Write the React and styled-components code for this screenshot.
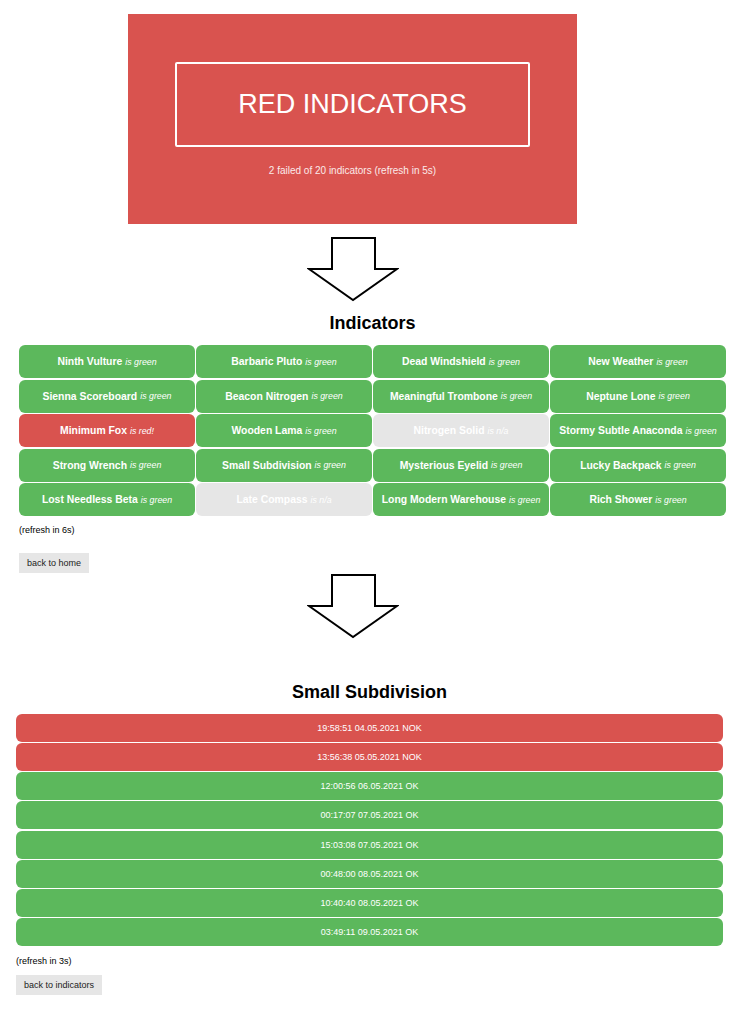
import React from 'react';
import styled, { createGlobalStyle } from 'styled-components';

const GlobalStyle = createGlobalStyle`
  body {
    margin: 0;
    background: #fff;
    font-family: "Liberation Sans", Arial, sans-serif;
  }
`;

const colors = {
  green: '#5cb85c',
  red: '#d9534f',
  na: '#e6e6e6',
};

const indicators = [
  ['Ninth Vulture', 'green'], ['Barbaric Pluto', 'green'], ['Dead Windshield', 'green'], ['New Weather', 'green'],
  ['Sienna Scoreboard', 'green'], ['Beacon Nitrogen', 'green'], ['Meaningful Trombone', 'green'], ['Neptune Lone', 'green'],
  ['Minimum Fox', 'red'], ['Wooden Lama', 'green'], ['Nitrogen Solid', 'na'], ['Stormy Subtle Anaconda', 'green'],
  ['Strong Wrench', 'green'], ['Small Subdivision', 'green'], ['Mysterious Eyelid', 'green'], ['Lucky Backpack', 'green'],
  ['Lost Needless Beta', 'green'], ['Late Compass', 'na'], ['Long Modern Warehouse', 'green'], ['Rich Shower', 'green'],
];

const history = [
  ['19:58:51 04.05.2021', false],
  ['13:56:38 05.05.2021', false],
  ['12:00:56 06.05.2021', true],
  ['00:17:07 07.05.2021', true],
  ['15:03:08 07.05.2021', true],
  ['00:48:00 08.05.2021', true],
  ['10:40:40 08.05.2021', true],
  ['03:49:11 09.05.2021', true],
];

const statusText = { green: 'is green', red: 'is red!', na: 'is n/a' };

const Page = styled.div`
  padding: 14px 0 18px;
`;

const Hero = styled.div`
  width: 705px;
  display: flex;
  flex-direction: column;
  align-items: center;
`;

const Banner = styled.div`
  width: 449px;
  height: 210px;
  box-sizing: border-box;
  padding-top: 48px;
  background: ${colors.red};
  display: flex;
  flex-direction: column;
  align-items: center;
`;

const BannerFrame = styled.div`
  width: 355px;
  height: 85px;
  box-sizing: border-box;
  border: 2px solid #fff;
  border-radius: 2px;
  display: flex;
  align-items: center;
  justify-content: center;
  color: #fff;
  font-size: 27px;
`;

const BannerNote = styled.div`
  margin-top: 18px;
  color: #fbeaea;
  font-size: 10px;
  line-height: 12px;
`;

const ArrowBox = styled.div`
  margin-top: ${p => p.$top}px;
  width: 92px;
  height: 65px;
  display: flex;
`;

const Section = styled.section`
  padding: ${p => p.$pad};
`;

const Heading = styled.h2`
  margin: ${p => p.$top}px 0 ${p => p.$bottom}px;
  text-align: center;
  font-size: 18px;
  line-height: 21px;
  font-weight: bold;
  color: #000;
`;

const Grid = styled.div`
  display: grid;
  grid-template-columns: repeat(4, 1fr);
  column-gap: 1px;
  row-gap: 1.5px;
`;

const Cell = styled.div`
  height: 33px;
  border-radius: 6px;
  background: ${p => colors[p.$status]};
  color: #fff;
  display: flex;
  align-items: center;
  justify-content: center;
  white-space: nowrap;
  font-size: 10.4px;
  font-weight: bold;

  em {
    font-weight: normal;
    font-size: 8.8px;
    margin-left: 3px;
  }
`;

const Note = styled.div`
  margin-top: ${p => p.$top}px;
  font-size: 9px;
  line-height: 11px;
  color: #000;
`;

const BackButton = styled.button`
  margin-top: ${p => p.$top}px;
  display: block;
  height: 20px;
  padding: 0 8px;
  border: none;
  background: #e6e6e6;
  color: #222;
  font-family: inherit;
  font-size: 9px;
  cursor: pointer;
`;

const Rows = styled.div`
  display: flex;
  flex-direction: column;
  gap: 1.15px;
`;

const HistoryRow = styled.div`
  height: 28px;
  border-radius: 6px;
  background: ${p => (p.$ok ? colors.green : colors.red)};
  color: #fff;
  font-size: 9px;
  display: flex;
  align-items: center;
  justify-content: center;
`;

function DownArrow() {
  return (
    <svg width="92" height="65" viewBox="0 0 92 65">
      <polygon
        points="25,1 68,1 68,32 90,32 46,63 2,32 25,32"
        fill="#fff"
        stroke="#000"
        strokeWidth="2"
        strokeLinejoin="miter"
      />
    </svg>
  );
}

export default function App() {
  return (
    <Page>
      <GlobalStyle />
      <Hero>
        <Banner>
          <BannerFrame>RED INDICATORS</BannerFrame>
          <BannerNote>2 failed of 20 indicators (refresh in 5s)</BannerNote>
        </Banner>
        <ArrowBox $top={13}>
          <DownArrow />
        </ArrowBox>
      </Hero>

      <Section $pad="0 20px 0 19px">
        <Heading $top={11} $bottom={11}>Indicators</Heading>
        <Grid>
          {indicators.map(([name, status]) => (
            <Cell key={name} $status={status}>
              {name}<em>{statusText[status]}</em>
            </Cell>
          ))}
        </Grid>
        <Note $top={9}>(refresh in 6s)</Note>
        <BackButton $top={17}>back to home</BackButton>
      </Section>

      <Hero>
        <ArrowBox $top={1}>
          <DownArrow />
        </ArrowBox>
      </Hero>

      <Section $pad="0 23px 0 16px">
        <Heading $top={43} $bottom={11}>Small Subdivision</Heading>
        <Rows>
          {history.map(([time, ok]) => (
            <HistoryRow key={time} $ok={ok}>
              {time} {ok ? 'OK' : 'NOK'}
            </HistoryRow>
          ))}
        </Rows>
        <Note $top={10}>(refresh in 3s)</Note>
        <BackButton $top={8}>back to indicators</BackButton>
      </Section>
    </Page>
  );
}
